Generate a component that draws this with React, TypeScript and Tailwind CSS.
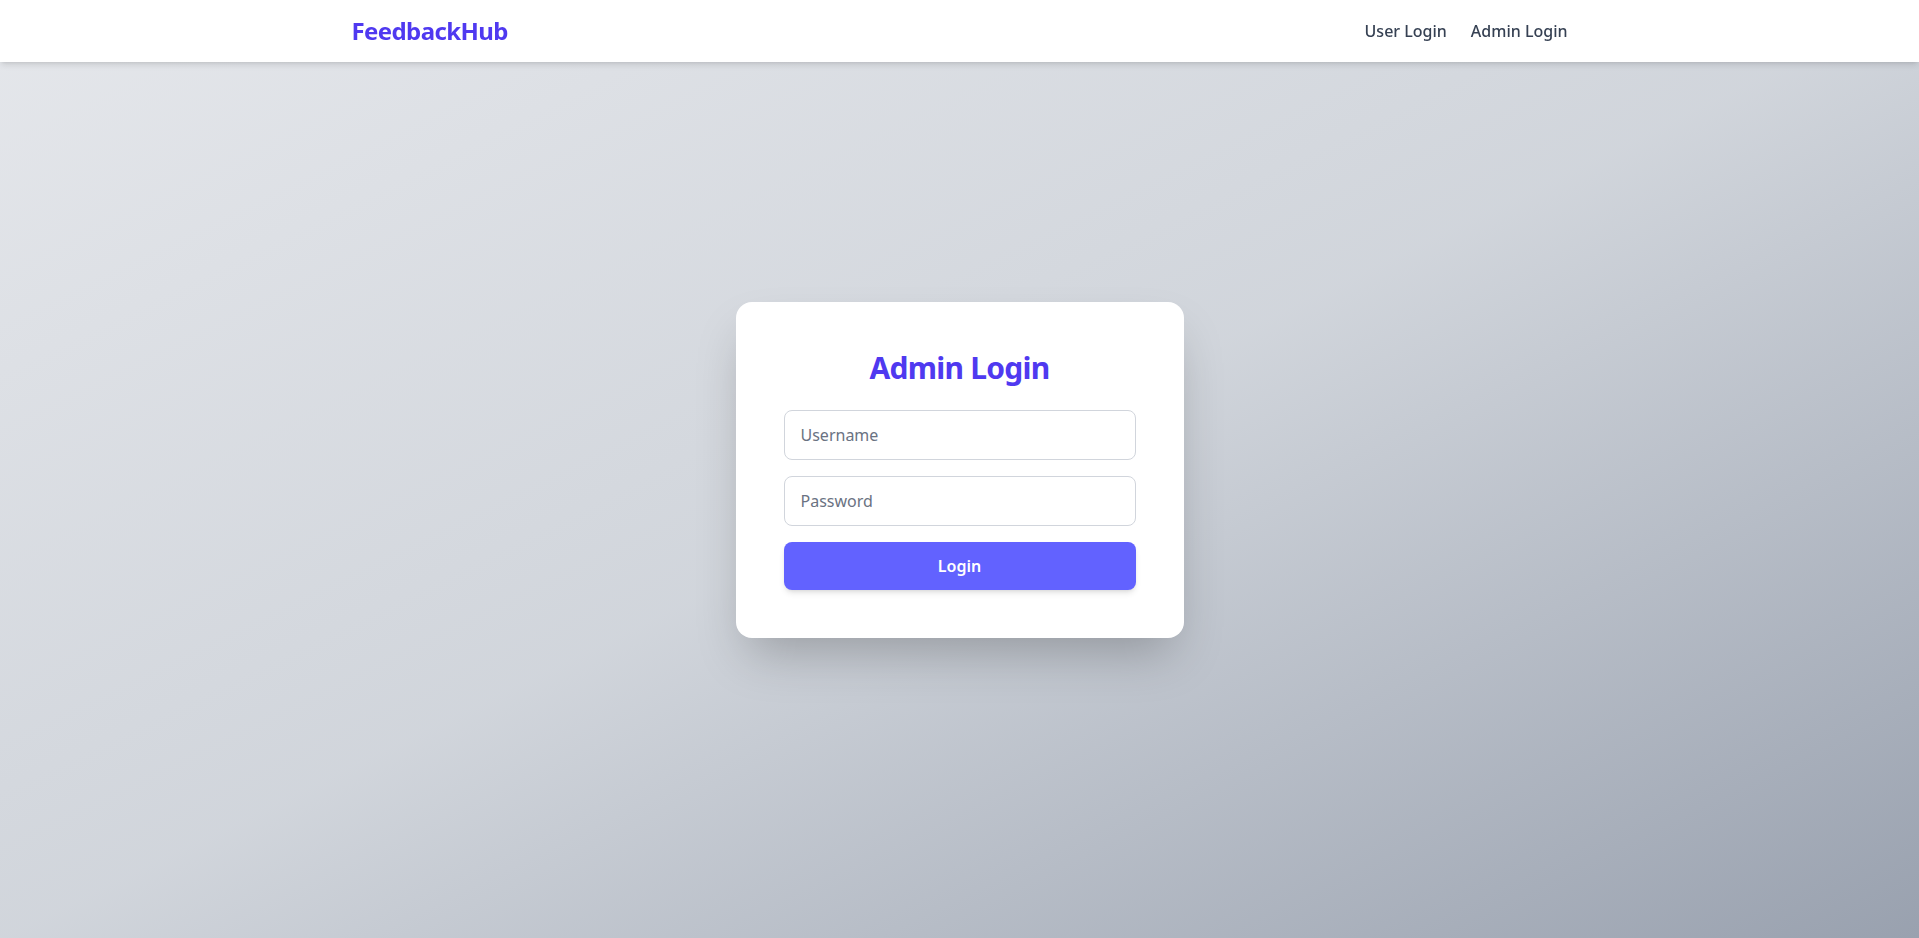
import { useState } from "react";

const font = { fontFamily: '"Noto Sans", "Open Sans", sans-serif' };

function Navbar() {
  return (
    <nav className="fixed top-0 left-0 right-0 z-10 h-[62px] bg-white shadow-md">
      <div className="max-w-7xl mx-auto px-8 h-full flex items-center justify-between">
        <a href="#" className="text-2xl font-bold tracking-tight text-[#4f39f0]">
          FeedbackHub
        </a>
        <div className="flex items-center gap-6 text-base font-medium text-gray-700">
          <a href="#">User Login</a>
          <a href="#">Admin Login</a>
        </div>
      </div>
    </nav>
  );
}

export default function App() {
  const [username, setUsername] = useState("");
  const [password, setPassword] = useState("");

  return (
    <div style={font} className="min-h-screen bg-gradient-to-br from-gray-200 via-gray-300 to-gray-400">
      <Navbar />
      <main className="min-h-screen flex items-center justify-center pt-[2px]">
        <div className="w-full max-w-md bg-white rounded-2xl shadow-2xl p-12">
          <h1 className="text-3xl font-bold tracking-tight text-center text-[#4f39f0] mb-6">Admin Login</h1>
          <form className="space-y-4" onSubmit={(e) => e.preventDefault()}>
            <input
              type="text"
              placeholder="Username"
              value={username}
              onChange={(e) => setUsername(e.target.value)}
              className="w-full px-4 py-3 border border-gray-300 rounded-lg text-base placeholder-gray-500 focus:outline-none"
            />
            <input
              type="password"
              placeholder="Password"
              value={password}
              onChange={(e) => setPassword(e.target.value)}
              className="w-full px-4 py-3 border border-gray-300 rounded-lg text-base placeholder-gray-500 focus:outline-none"
            />
            <button
              type="submit"
              className="w-full py-3 rounded-lg bg-[#6262ff] text-white font-semibold shadow-md"
            >
              Login
            </button>
          </form>
        </div>
      </main>
    </div>
  );
}
